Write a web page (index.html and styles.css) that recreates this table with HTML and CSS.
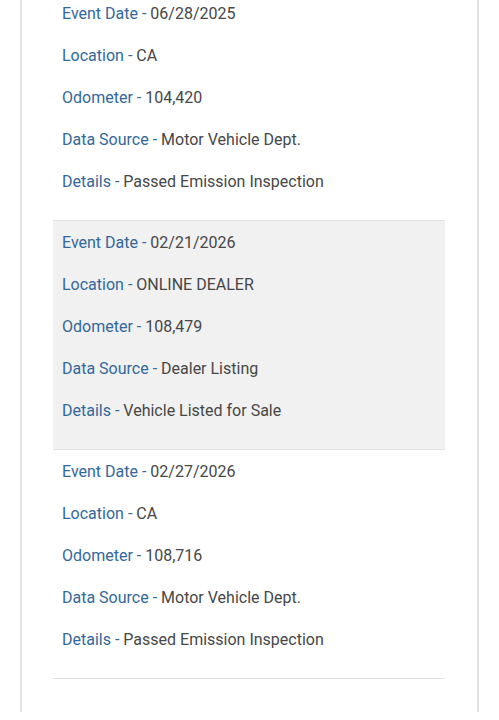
FILE: index.html
```html
<!DOCTYPE html>
<html lang="en">
<head>
    <meta charset="UTF-8">
    <meta name="viewport" content="width=device-width, initial-scale=1.0">
    <title>Vehicle History</title>
    <link rel="stylesheet" href="styles.css">
</head>
<body>

<div class="history-card">
    <div class="history-list">
        <div class="entry">
            <p class="row"><span class="label">Event Date -</span> 06/28/2025</p>
            <p class="row"><span class="label">Location -</span> CA</p>
            <p class="row"><span class="label">Odometer -</span> 104,420</p>
            <p class="row"><span class="label">Data Source -</span> Motor Vehicle Dept.</p>
            <p class="row"><span class="label">Details -</span> Passed Emission Inspection</p>
        </div>
        <div class="entry shaded">
            <p class="row"><span class="label">Event Date -</span> 02/21/2026</p>
            <p class="row"><span class="label">Location -</span> ONLINE DEALER</p>
            <p class="row"><span class="label">Odometer -</span> 108,479</p>
            <p class="row"><span class="label">Data Source -</span> Dealer Listing</p>
            <p class="row"><span class="label">Details -</span> Vehicle Listed for Sale</p>
        </div>
        <div class="entry">
            <p class="row"><span class="label">Event Date -</span> 02/27/2026</p>
            <p class="row"><span class="label">Location -</span> CA</p>
            <p class="row"><span class="label">Odometer -</span> 108,716</p>
            <p class="row"><span class="label">Data Source -</span> Motor Vehicle Dept.</p>
            <p class="row"><span class="label">Details -</span> Passed Emission Inspection</p>
        </div>
    </div>
</div>

</body>
</html>
```

FILE: styles.css
```css
body {
    font-family: Roboto, "Liberation Sans", sans-serif;
    background-color: #fff;
    color: #474747;
    margin: 0;
    padding: 0;
    height: 720px;
    overflow: hidden;
}

.history-card {
    margin: 0 20px;
    border-left: 2px solid #e2e2e2;
    border-right: 2px solid #e2e2e2;
    min-height: 720px;
    padding: 0 32px 0 31px;
}

/* page is scrolled a little, first entry starts above the fold */
.history-list {
    margin-top: -8px;
}

.entry {
    padding: 12px 9px 28px;
    border-bottom: 1px solid #e3e3e3;
    display: flex;
    flex-direction: column;
    gap: 22px;
}

.entry.shaded {
    background-color: #f1f1f1;
}

.row {
    margin: 0;
    font-size: 16px;
    line-height: 20px;
    white-space: nowrap;
}

.label {
    color: #33689a;
}
```
